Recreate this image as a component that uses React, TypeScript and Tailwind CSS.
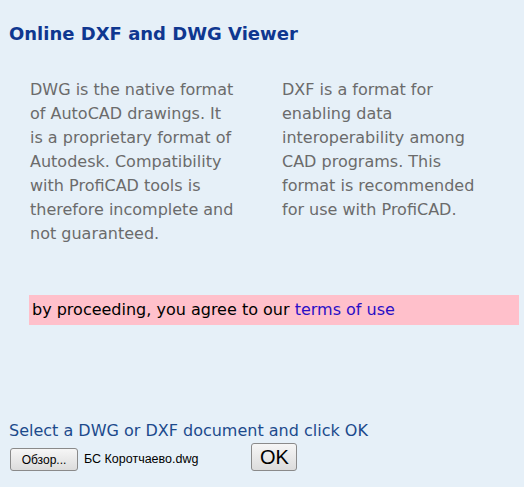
import React from 'react'

const font = { fontFamily: '"DejaVu Sans", Verdana, sans-serif' }
const uiFont = { fontFamily: '"Liberation Sans", Arial, sans-serif' }

function App() {
  return (
    <div className="min-h-[487px] w-[524px] bg-[#e6f0f8] pt-[23px]" style={font}>
      <h1 className="pl-[9px] text-[18px] font-bold leading-[22px] text-[#0f3790]">
        Online DXF and DWG Viewer
      </h1>

      <div className="mt-[33px] flex pl-[30px] text-[16px] leading-[24px] text-[#6b6b6b]">
        <p className="w-[252px] pr-[47px]">
          DWG is the native format of AutoCAD drawings. It is a proprietary format of Autodesk.
          Compatibility with ProfiCAD tools is therefore incomplete and not guaranteed.
        </p>
        <p className="w-[200px]">
          DXF is a format for enabling data interoperability among CAD programs. This format is
          recommended for use with ProfiCAD.
        </p>
      </div>

      <div className="mt-[49px] ml-[29px] mr-[5px] bg-[#ffc0cb] py-[3px] pl-[3px] text-[16px] leading-[24px] text-black">
        by proceeding, you agree to our{' '}
        <a href="#" className="text-[#2a0fc6]">terms of use</a>
      </div>

      <div className="mt-[95px] pl-[9px]">
        <div className="text-[16px] leading-[22px] text-[#1c4a8c]">
          Select a DWG or DXF document and click OK
        </div>
        <div className="mt-[1px] flex items-end" style={uiFont}>
          <div className="flex items-center text-[12.5px] text-black">
            <button className="ml-[1px] h-[23px] w-[68px] rounded-[3px] border border-[#8a8a8a] bg-gradient-to-b from-[#f6f6f6] to-[#dcdcdc] text-[12px]">
              Обзор...
            </button>
            <span className="ml-[6px]">БС Коротчаево.dwg</span>
          </div>
          <button className="ml-[53px] h-[28px] w-[46px] rounded-[3px] border border-[#8a8a8a] bg-gradient-to-b from-[#f6f6f6] to-[#dcdcdc] text-[20px] leading-none text-black">
            OK
          </button>
        </div>
      </div>
    </div>
  )
}

export default App
